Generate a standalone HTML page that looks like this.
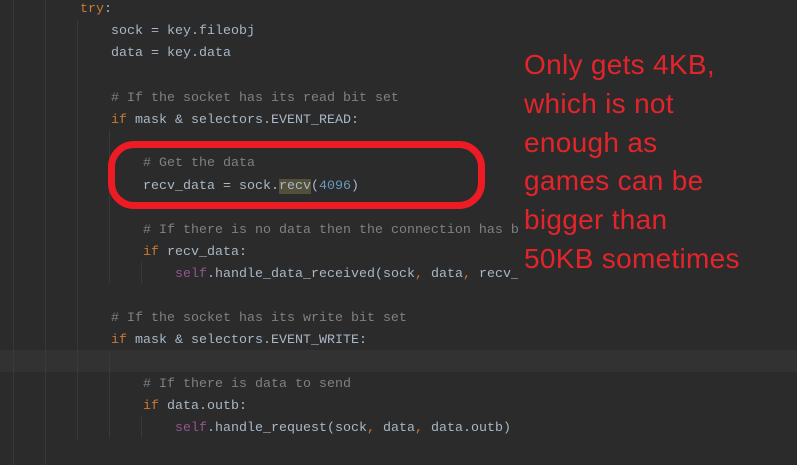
<!DOCTYPE html>
<html><head><meta charset="utf-8"><style>
html,body{margin:0;padding:0}
body{width:797px;height:465px;background:#2b2b2b;position:relative;overflow:hidden;font-family:"Liberation Mono","DejaVu Sans Mono",monospace;font-size:13.33px;color:#a9b7c6}
.l{position:absolute;left:0;height:22px;line-height:22px;white-space:pre}
.k{color:#cc7832}.c{color:#808080}.s{color:#94558d}.n{color:#6897bb}
.g{position:absolute;width:1px;background:#393939}
.hl{position:absolute;left:0;top:350px;width:797px;height:22px;background:#323232}
.box{position:absolute;left:108px;top:141px;width:363px;height:54px;border:7px solid #ed1c24;border-radius:26px}
.note{position:absolute;left:518px;top:46px;width:279px;padding-left:6px;background:#2b2b2b;color:#e3242b;font-family:"Liberation Sans",sans-serif;font-size:28px;letter-spacing:0.3px;line-height:38.8px;height:240px}
</style></head><body>
<div class="hl"></div>
<div class="g" style="left:13px;top:0;height:465px"></div>
<div class="g" style="left:45px;top:0;height:465px"></div>
<div class="g" style="left:77px;top:20px;height:420px"></div>
<div class="g" style="left:109px;top:130px;height:153px"></div>
<div class="g" style="left:109px;top:350px;height:88px"></div>
<div class="g" style="left:141px;top:262px;height:22px"></div>
<div class="g" style="left:141px;top:416px;height:22px"></div>
<div class="l" style="top:-1px;left:80px"><span class="k">try</span>:</div>
<div class="l" style="top:21px;left:111px">sock = key.fileobj</div>
<div class="l" style="top:43px;left:111px">data = key.data</div>
<div class="l c" style="top:88px;left:111px"># If the socket has its read bit set</div>
<div class="l" style="top:110px;left:111px"><span class="k">if</span> mask &amp; selectors.EVENT_READ:</div>
<div class="l c" style="top:153px;left:143px"># Get the data</div>
<div class="l" style="top:176px;left:143px">recv_data = sock.<span style="background:#52503a">recv</span>(<span class="n">4096</span>)</div>
<div class="l c" style="top:220px;left:143px"># If there is no data then the connection has b</div>
<div class="l" style="top:242px;left:143px"><span class="k">if</span> recv_data:</div>
<div class="l" style="top:264px;left:175px"><span class="s">self</span>.handle_data_received(sock<span class="k">,</span> data<span class="k">,</span> recv_</div>
<div class="l c" style="top:308px;left:111px"># If the socket has its write bit set</div>
<div class="l" style="top:330px;left:111px"><span class="k">if</span> mask &amp; selectors.EVENT_WRITE:</div>
<div class="l c" style="top:374px;left:143px"># If there is data to send</div>
<div class="l" style="top:396px;left:143px"><span class="k">if</span> data.outb:</div>
<div class="l" style="top:418px;left:175px"><span class="s">self</span>.handle_request(sock<span class="k">,</span> data<span class="k">,</span> data.outb)</div>
<div class="box"></div>
<div class="note">Only gets 4KB,<br>which is not<br>enough as<br>games can be<br>bigger than<br>50KB sometimes</div>
</body></html>
